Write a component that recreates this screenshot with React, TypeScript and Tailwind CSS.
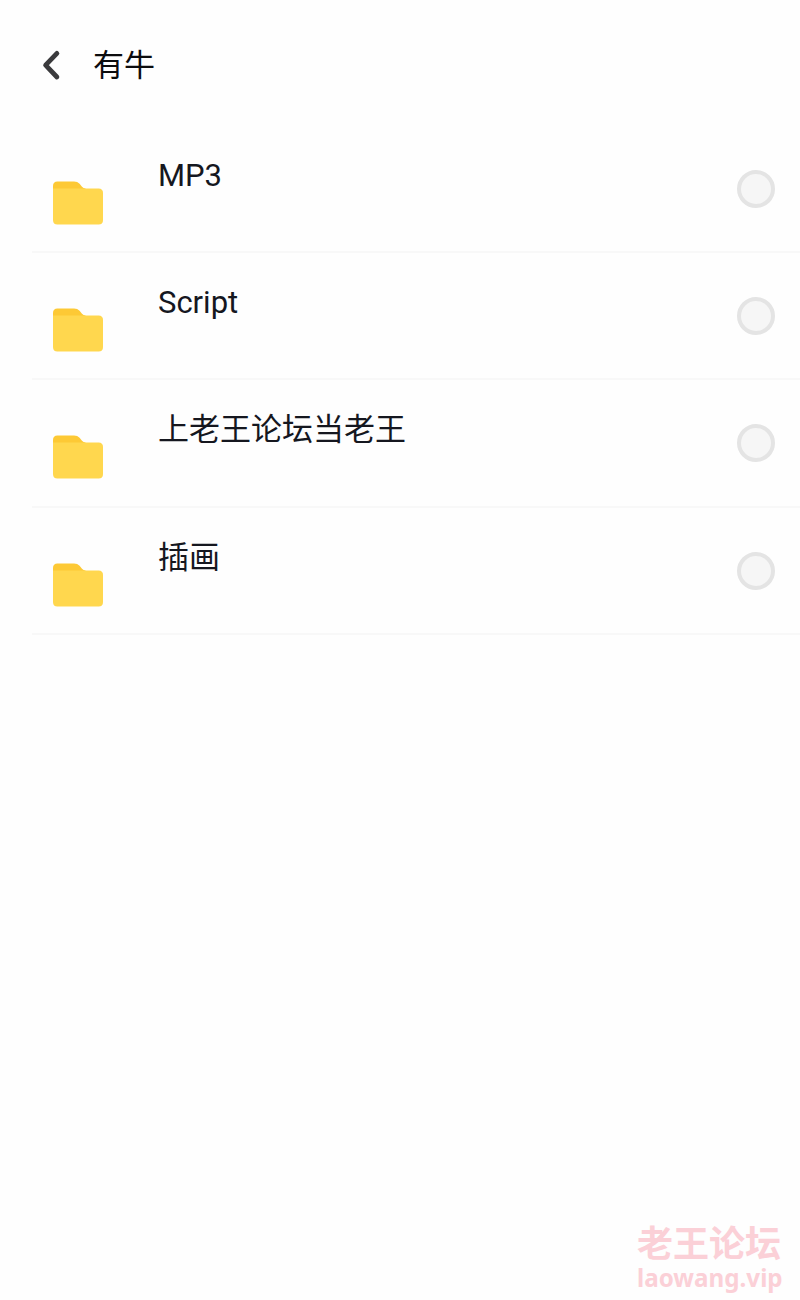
const folders = [
  { id: 1, name: "MP3" },
  { id: 2, name: "Script" },
  { id: 3, name: "上老王论坛当老王" },
  { id: 4, name: "插画" },
];

function BackIcon() {
  return (
    <svg className="block h-8 w-5 shrink-0" viewBox="0 0 20 32" fill="none">
      <path
        d="M15.9 4.4 L4.6 16.2 L15.9 28"
        stroke="#3a3a3c"
        strokeWidth="4.8"
        strokeLinecap="round"
        strokeLinejoin="round"
      />
    </svg>
  );
}

function FolderIcon() {
  return (
    <svg className="block h-11 w-[50px]" viewBox="0 0 50 44">
      <path d="M0 12 V5 Q0 0.5 4.5 0.5 H21 Q24.5 0.5 26.6 2.8 L29 5.8 Q30.4 7.5 32.5 7.5 V12 Z" fill="#fdc935" />
      <path d="M0 7.5 H45.5 Q50 7.5 50 12 V39 Q50 43.5 45.5 43.5 H4.5 Q0 43.5 0 39 Z" fill="#ffd74e" />
    </svg>
  );
}

function FolderRow({ name }: { name: string }) {
  return (
    <li className="ml-8 flex h-[127.3px] items-start border-b-2 border-[#f8f8f8] pl-[20.6px] pr-[25px]">
      <div className="w-[105.4px] shrink-0 pt-[55px]">
        <FolderIcon />
      </div>
      <span className="flex-1 pt-[30px] text-[31px] leading-10 text-[#15171f]">{name}</span>
      <span className="mt-11 size-[38px] shrink-0 rounded-full border-4 border-[#e4e4e4] bg-[#f6f6f6]" />
    </li>
  );
}

export default function App() {
  return (
    <div className="relative flex h-[1300px] w-[800px] flex-col overflow-hidden bg-[#fefefe] font-[Roboto,'Noto_Sans_CJK_SC',sans-serif]">
      {/* Header */}
      <header className="flex h-[125.8px] items-start pl-[41px] pt-[46px]">
        <div className="mt-[3px]">
          <BackIcon />
        </div>
        <h1 className="ml-8 text-[31px] leading-10 text-[#0c0c0e]">有牛</h1>
      </header>

      {/* Folder list */}
      <ul>
        {folders.map((folder) => (
          <FolderRow key={folder.id} name={folder.name} />
        ))}
      </ul>

      {/* Watermark */}
      <div className="absolute left-[637px] top-[1225px] font-bold text-[#fbd0d7]">
        <div className="text-[36px] leading-10">老王论坛</div>
        <div className="font-['Noto_Sans',sans-serif] text-[24.2px] leading-[26px]">laowang.vip</div>
      </div>
    </div>
  );
}
